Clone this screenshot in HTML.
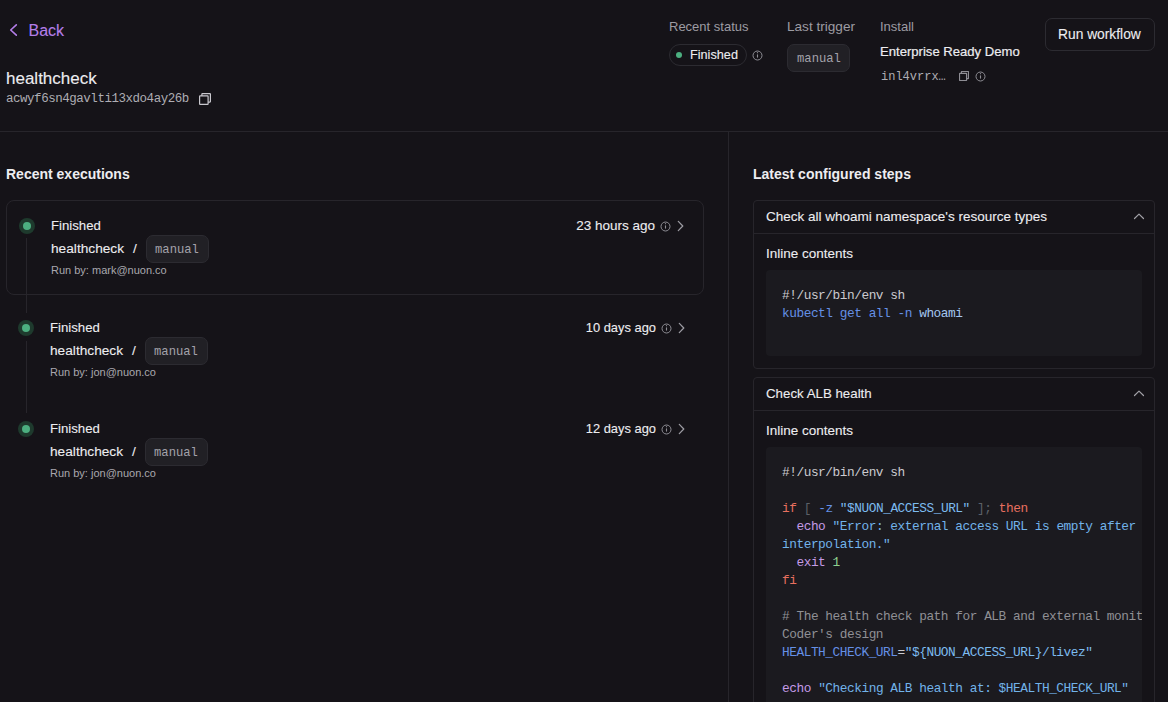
<!DOCTYPE html>
<html><head><meta charset="utf-8"><style>
html,body{margin:0;padding:0;width:1168px;height:702px;overflow:hidden;background:#151318;}
body{position:relative;font-family:"Liberation Sans",sans-serif;}
.t{position:absolute;white-space:pre;}
.code{font-family:"Liberation Mono",monospace;font-size:12.8px;letter-spacing:-0.46px;line-height:18px;white-space:pre;color:#cccbd0;}
</style></head><body>
<svg style="position:absolute;left:9px;top:23px;" width="10" height="14" viewBox="0 0 10 14" fill="none"><path d="M7.3 1.9L1.7 7L7.3 12.1" stroke="#b47ee9" stroke-width="1.6" stroke-linecap="round" stroke-linejoin="round"/></svg>
<div class="t" style="left:28.5px;top:19.95px;font-size:16px;line-height:21px;color:#b47ee9;font-weight:400;font-family:'Liberation Sans', sans-serif;-webkit-text-stroke:0.1px currentColor">Back</div>
<div class="t" style="left:6px;top:68.11px;font-size:17px;line-height:22px;color:#ededf0;font-weight:400;font-family:'Liberation Sans', sans-serif;-webkit-text-stroke:0.1px currentColor">healthcheck</div>
<div class="t" style="left:6px;top:90.67px;font-size:12.5px;line-height:16px;color:#aeadb3;font-weight:400;font-family:'Liberation Mono', monospace;letter-spacing:-0.47px">acwyf6sn4gavlti13xdo4ay26b</div>
<svg style="position:absolute;left:199px;top:93px;" width="12" height="12" viewBox="0 0 12 12" fill="none"><g transform="scale(1.0)" stroke="#c9c8ce" stroke-width="1.20" stroke-linejoin="round" fill="none"><rect x="0.6" y="2.9" width="8.5" height="8.5" rx="0.5"/><path d="M2.9 2.9V1.1A0.5 0.5 0 0 1 3.4 0.6H10.9A0.5 0.5 0 0 1 11.4 1.1V8.6A0.5 0.5 0 0 1 10.9 9.1H9.1"/></g></svg>
<div style="position:absolute;left:0px;top:131px;width:1168px;height:1px;box-sizing:border-box;background:#27252b"></div>
<div style="position:absolute;left:728px;top:131px;width:1px;height:571px;box-sizing:border-box;background:#27252b"></div>
<div class="t" style="left:669px;top:17.99px;font-size:13px;line-height:17px;color:#9d9ca3;font-weight:400;font-family:'Liberation Sans', sans-serif;">Recent status</div>
<div class="t" style="left:787px;top:18.28px;font-size:13.6px;line-height:18px;color:#9d9ca3;font-weight:400;font-family:'Liberation Sans', sans-serif;">Last trigger</div>
<div class="t" style="left:880px;top:17.99px;font-size:13px;line-height:17px;color:#9d9ca3;font-weight:400;font-family:'Liberation Sans', sans-serif;">Install</div>
<div style="position:absolute;left:669px;top:44px;width:78px;height:22px;box-sizing:border-box;border:1px solid #2c2b31;border-radius:11px"></div>
<div style="position:absolute;left:676px;top:52px;width:6px;height:6px;box-sizing:border-box;background:#4caf80;border-radius:50%"></div>
<div class="t" style="left:690px;top:47.10px;font-size:12.7px;line-height:17px;color:#ededf0;font-weight:400;font-family:'Liberation Sans', sans-serif;-webkit-text-stroke:0.1px currentColor">Finished</div>
<svg style="position:absolute;left:751.5px;top:49.5px;" width="11" height="11" viewBox="0 0 11 11" fill="none"><circle cx="5.5" cy="5.5" r="4.5" stroke="#8e8d94" stroke-width="1"/><path d="M5.5 4.4V7.6" stroke="#8e8d94" stroke-width="1.1"/><circle cx="5.5" cy="2.7" r="0.6" fill="#8e8d94"/></svg>
<div style="position:absolute;left:787px;top:44px;width:63px;height:28px;box-sizing:border-box;background:#212025;border:1px solid #2c2b31;border-radius:7px"></div>
<div class="t" style="left:797px;top:50.75px;font-size:12.2px;line-height:16px;color:#a3a2aa;font-weight:400;font-family:'Liberation Mono', monospace;">manual</div>
<div class="t" style="left:880px;top:42.96px;font-size:13.1px;line-height:17px;color:#ededf0;font-weight:400;font-family:'Liberation Sans', sans-serif;-webkit-text-stroke:0.2px currentColor">Enterprise Ready Demo</div>
<div class="t" style="left:881px;top:68.81px;font-size:12px;line-height:16px;color:#aeadb3;font-weight:400;font-family:'Liberation Mono', monospace;">inl4vrrx…</div>
<svg style="position:absolute;left:959px;top:71px;" width="10" height="10" viewBox="0 0 10 10" fill="none"><g transform="scale(0.8333333333333334)" stroke="#8e8d94" stroke-width="1.44" stroke-linejoin="round" fill="none"><rect x="0.6" y="2.9" width="8.5" height="8.5" rx="0.5"/><path d="M2.9 2.9V1.1A0.5 0.5 0 0 1 3.4 0.6H10.9A0.5 0.5 0 0 1 11.4 1.1V8.6A0.5 0.5 0 0 1 10.9 9.1H9.1"/></g></svg>
<svg style="position:absolute;left:974.5px;top:70.5px;" width="11" height="11" viewBox="0 0 11 11" fill="none"><circle cx="5.5" cy="5.5" r="4.5" stroke="#8e8d94" stroke-width="1"/><path d="M5.5 4.4V7.6" stroke="#8e8d94" stroke-width="1.1"/><circle cx="5.5" cy="2.7" r="0.6" fill="#8e8d94"/></svg>
<div style="position:absolute;left:1045px;top:18px;width:110px;height:33px;box-sizing:border-box;border:1px solid #2c2b31;border-radius:7px"></div>
<div class="t" style="left:1058px;top:26.22px;font-size:13.8px;line-height:18px;color:#ededf0;font-weight:400;font-family:'Liberation Sans', sans-serif;-webkit-text-stroke:0.1px currentColor">Run workflow</div>
<div class="t" style="left:6px;top:165.15px;font-size:14px;line-height:18px;color:#ededf0;font-weight:700;font-family:'Liberation Sans', sans-serif;">Recent executions</div>
<div style="position:absolute;left:6px;top:200px;width:698px;height:95px;box-sizing:border-box;border:1px solid #27252b;border-radius:8px"></div>
<div style="position:absolute;left:19px;top:218px;width:16px;height:16px;box-sizing:border-box;background:#1e3a2d;border-radius:50%"></div>
<div style="position:absolute;left:23px;top:222px;width:8px;height:8px;box-sizing:border-box;background:#4caf80;border-radius:50%"></div>
<div class="t" style="left:51px;top:216.92px;font-size:13.2px;line-height:17px;color:#ededf0;font-weight:400;font-family:'Liberation Sans', sans-serif;-webkit-text-stroke:0.1px currentColor">Finished</div>
<div class="t" style="left:51px;top:240.25px;font-size:13.7px;line-height:18px;color:#ededf0;font-weight:400;font-family:'Liberation Sans', sans-serif;-webkit-text-stroke:0.1px currentColor">healthcheck</div>
<div class="t" style="left:133px;top:240.25px;font-size:13.7px;line-height:18px;color:#ededf0;font-weight:400;font-family:'Liberation Sans', sans-serif;-webkit-text-stroke:0.1px currentColor">/</div>
<div style="position:absolute;left:146px;top:235px;width:63px;height:28px;box-sizing:border-box;background:#212025;border:1px solid #2c2b31;border-radius:7px"></div>
<div class="t" style="left:155px;top:241.75px;font-size:12.2px;line-height:16px;color:#a3a2aa;font-weight:400;font-family:'Liberation Mono', monospace;">manual</div>
<div class="t" style="left:51px;top:263.19px;font-size:11px;line-height:14px;color:#a9a8ae;font-weight:400;font-family:'Liberation Sans', sans-serif;">Run by: mark@nuon.co</div>
<div class="t" style="right:513px;top:216.32px;font-size:13.5px;line-height:20px;color:#ededf0;-webkit-text-stroke:0.1px currentColor">23 hours ago</div>
<svg style="position:absolute;left:659.5px;top:220.5px;" width="11" height="11" viewBox="0 0 11 11" fill="none"><circle cx="5.5" cy="5.5" r="4.5" stroke="#8e8d94" stroke-width="1"/><path d="M5.5 4.4V7.6" stroke="#8e8d94" stroke-width="1.1"/><circle cx="5.5" cy="2.7" r="0.6" fill="#8e8d94"/></svg>
<svg style="position:absolute;left:676px;top:219px;" width="9" height="14" viewBox="0 0 9 14" fill="none"><path d="M2.3 2.4L6.8 7L2.3 11.6" stroke="#9d9ca3" stroke-width="1.25" stroke-linecap="round" stroke-linejoin="round"/></svg>
<div style="position:absolute;left:18px;top:320px;width:16px;height:16px;box-sizing:border-box;background:#1e3a2d;border-radius:50%"></div>
<div style="position:absolute;left:22px;top:324px;width:8px;height:8px;box-sizing:border-box;background:#4caf80;border-radius:50%"></div>
<div class="t" style="left:50px;top:318.92px;font-size:13.2px;line-height:17px;color:#ededf0;font-weight:400;font-family:'Liberation Sans', sans-serif;-webkit-text-stroke:0.1px currentColor">Finished</div>
<div class="t" style="left:50px;top:342.25px;font-size:13.7px;line-height:18px;color:#ededf0;font-weight:400;font-family:'Liberation Sans', sans-serif;-webkit-text-stroke:0.1px currentColor">healthcheck</div>
<div class="t" style="left:132px;top:342.25px;font-size:13.7px;line-height:18px;color:#ededf0;font-weight:400;font-family:'Liberation Sans', sans-serif;-webkit-text-stroke:0.1px currentColor">/</div>
<div style="position:absolute;left:145px;top:337px;width:63px;height:28px;box-sizing:border-box;background:#212025;border:1px solid #2c2b31;border-radius:7px"></div>
<div class="t" style="left:154px;top:343.75px;font-size:12.2px;line-height:16px;color:#a3a2aa;font-weight:400;font-family:'Liberation Mono', monospace;">manual</div>
<div class="t" style="left:50px;top:365.19px;font-size:11px;line-height:14px;color:#a9a8ae;font-weight:400;font-family:'Liberation Sans', sans-serif;">Run by: jon@nuon.co</div>
<div class="t" style="right:512px;top:317.53px;font-size:12.9px;line-height:20px;color:#ededf0;-webkit-text-stroke:0.1px currentColor">10 days ago</div>
<svg style="position:absolute;left:660.5px;top:322.5px;" width="11" height="11" viewBox="0 0 11 11" fill="none"><circle cx="5.5" cy="5.5" r="4.5" stroke="#8e8d94" stroke-width="1"/><path d="M5.5 4.4V7.6" stroke="#8e8d94" stroke-width="1.1"/><circle cx="5.5" cy="2.7" r="0.6" fill="#8e8d94"/></svg>
<svg style="position:absolute;left:677px;top:321px;" width="9" height="14" viewBox="0 0 9 14" fill="none"><path d="M2.3 2.4L6.8 7L2.3 11.6" stroke="#9d9ca3" stroke-width="1.25" stroke-linecap="round" stroke-linejoin="round"/></svg>
<div style="position:absolute;left:18px;top:421px;width:16px;height:16px;box-sizing:border-box;background:#1e3a2d;border-radius:50%"></div>
<div style="position:absolute;left:22px;top:425px;width:8px;height:8px;box-sizing:border-box;background:#4caf80;border-radius:50%"></div>
<div class="t" style="left:50px;top:419.92px;font-size:13.2px;line-height:17px;color:#ededf0;font-weight:400;font-family:'Liberation Sans', sans-serif;-webkit-text-stroke:0.1px currentColor">Finished</div>
<div class="t" style="left:50px;top:443.25px;font-size:13.7px;line-height:18px;color:#ededf0;font-weight:400;font-family:'Liberation Sans', sans-serif;-webkit-text-stroke:0.1px currentColor">healthcheck</div>
<div class="t" style="left:132px;top:443.25px;font-size:13.7px;line-height:18px;color:#ededf0;font-weight:400;font-family:'Liberation Sans', sans-serif;-webkit-text-stroke:0.1px currentColor">/</div>
<div style="position:absolute;left:145px;top:438px;width:63px;height:28px;box-sizing:border-box;background:#212025;border:1px solid #2c2b31;border-radius:7px"></div>
<div class="t" style="left:154px;top:444.75px;font-size:12.2px;line-height:16px;color:#a3a2aa;font-weight:400;font-family:'Liberation Mono', monospace;">manual</div>
<div class="t" style="left:50px;top:466.19px;font-size:11px;line-height:14px;color:#a9a8ae;font-weight:400;font-family:'Liberation Sans', sans-serif;">Run by: jon@nuon.co</div>
<div class="t" style="right:512px;top:418.53px;font-size:12.9px;line-height:20px;color:#ededf0;-webkit-text-stroke:0.1px currentColor">12 days ago</div>
<svg style="position:absolute;left:660.5px;top:423.5px;" width="11" height="11" viewBox="0 0 11 11" fill="none"><circle cx="5.5" cy="5.5" r="4.5" stroke="#8e8d94" stroke-width="1"/><path d="M5.5 4.4V7.6" stroke="#8e8d94" stroke-width="1.1"/><circle cx="5.5" cy="2.7" r="0.6" fill="#8e8d94"/></svg>
<svg style="position:absolute;left:677px;top:422px;" width="9" height="14" viewBox="0 0 9 14" fill="none"><path d="M2.3 2.4L6.8 7L2.3 11.6" stroke="#9d9ca3" stroke-width="1.25" stroke-linecap="round" stroke-linejoin="round"/></svg>
<div style="position:absolute;left:26px;top:238px;width:1px;height:75px;box-sizing:border-box;background:#27252b"></div>
<div style="position:absolute;left:26px;top:341px;width:1px;height:72px;box-sizing:border-box;background:#27252b"></div>
<div class="t" style="left:753px;top:165.15px;font-size:14px;line-height:18px;color:#ededf0;font-weight:700;font-family:'Liberation Sans', sans-serif;">Latest configured steps</div>
<div style="position:absolute;left:753px;top:200px;width:402px;height:169px;box-sizing:border-box;border:1px solid #27252b;border-radius:4px;overflow:hidden"></div>
<div style="position:absolute;left:754px;top:233px;width:400px;height:1px;box-sizing:border-box;background:#27252b"></div>
<div class="t" style="left:766px;top:207.92px;font-size:13.5px;line-height:18px;color:#ededf0;font-weight:400;font-family:'Liberation Sans', sans-serif;-webkit-text-stroke:0.1px currentColor">Check all whoami namespace's resource types</div>
<svg style="position:absolute;left:1132px;top:211px;" width="14" height="10" viewBox="0 0 14 10" fill="none"><path d="M2.5 7.5L7 3.1L11.5 7.5" stroke="#a3a2a8" stroke-width="1.2" stroke-linecap="round" stroke-linejoin="round"/></svg>
<div class="t" style="left:766px;top:245.32px;font-size:13.5px;line-height:18px;color:#ededf0;font-weight:400;font-family:'Liberation Sans', sans-serif;-webkit-text-stroke:0.1px currentColor">Inline contents</div>
<div style="position:absolute;left:766px;top:270px;width:376px;height:86px;background:#1b1a1f;border-radius:4px;overflow:hidden"><div class="code" style="position:absolute;left:16px;top:17px"><div style="height:18px"><span style="color:#cccbd0">#!/usr/bin/env sh</span></div><div style="height:18px"><span style="color:#6590e6">kubectl get all -n </span><span style="color:#a4c6ef">whoami</span></div><div style="height:18px"></div></div></div>
<div style="position:absolute;left:753px;top:377px;width:402px;height:383px;box-sizing:border-box;border:1px solid #27252b;border-radius:4px;overflow:hidden"></div>
<div style="position:absolute;left:754px;top:410px;width:400px;height:1px;box-sizing:border-box;background:#27252b"></div>
<div class="t" style="left:766px;top:384.89px;font-size:13.3px;line-height:17px;color:#ededf0;font-weight:400;font-family:'Liberation Sans', sans-serif;-webkit-text-stroke:0.1px currentColor">Check ALB health</div>
<svg style="position:absolute;left:1132px;top:388px;" width="14" height="10" viewBox="0 0 14 10" fill="none"><path d="M2.5 7.5L7 3.1L11.5 7.5" stroke="#a3a2a8" stroke-width="1.2" stroke-linecap="round" stroke-linejoin="round"/></svg>
<div class="t" style="left:766px;top:422.32px;font-size:13.5px;line-height:18px;color:#ededf0;font-weight:400;font-family:'Liberation Sans', sans-serif;-webkit-text-stroke:0.1px currentColor">Inline contents</div>
<div style="position:absolute;left:766px;top:447px;width:376px;height:313px;background:#1b1a1f;border-radius:4px;overflow:hidden"><div class="code" style="position:absolute;left:16px;top:17px"><div style="height:18px"><span style="color:#cccbd0">#!/usr/bin/env sh</span></div><div style="height:18px"></div><div style="height:18px"><span style="color:#e8705f">if</span> <span style="color:#5c6068">[</span> <span style="color:#6590e6">-z</span> <span style="color:#7dbcf0">"$NUON_ACCESS_URL"</span> <span style="color:#5c6068">];</span> <span style="color:#e8705f">then</span></div><div style="height:18px">  <span style="color:#c59be6">echo</span> <span style="color:#72b3ea">"Error: external access URL is empty after</span></div><div style="height:18px"><span style="color:#72b3ea">interpolation."</span></div><div style="height:18px">  <span style="color:#c59be6">exit</span> <span style="color:#8fd08f">1</span></div><div style="height:18px"><span style="color:#e8705f">fi</span></div><div style="height:18px"></div><div style="height:18px"><span style="color:#909095"># The health check path for ALB and external monitoring</span></div><div style="height:18px"><span style="color:#909095">Coder's design</span></div><div style="height:18px"><span style="color:#6590e6">HEALTH_CHECK_URL</span><span style="color:#cccbd0">=</span><span style="color:#7dbcf0">"${NUON_ACCESS_URL}/livez"</span></div><div style="height:18px"></div><div style="height:18px"><span style="color:#c59be6">echo</span> <span style="color:#72b3ea">"Checking ALB health at: $HEALTH_CHECK_URL"</span></div><div style="height:18px"></div></div></div>
</body></html>
